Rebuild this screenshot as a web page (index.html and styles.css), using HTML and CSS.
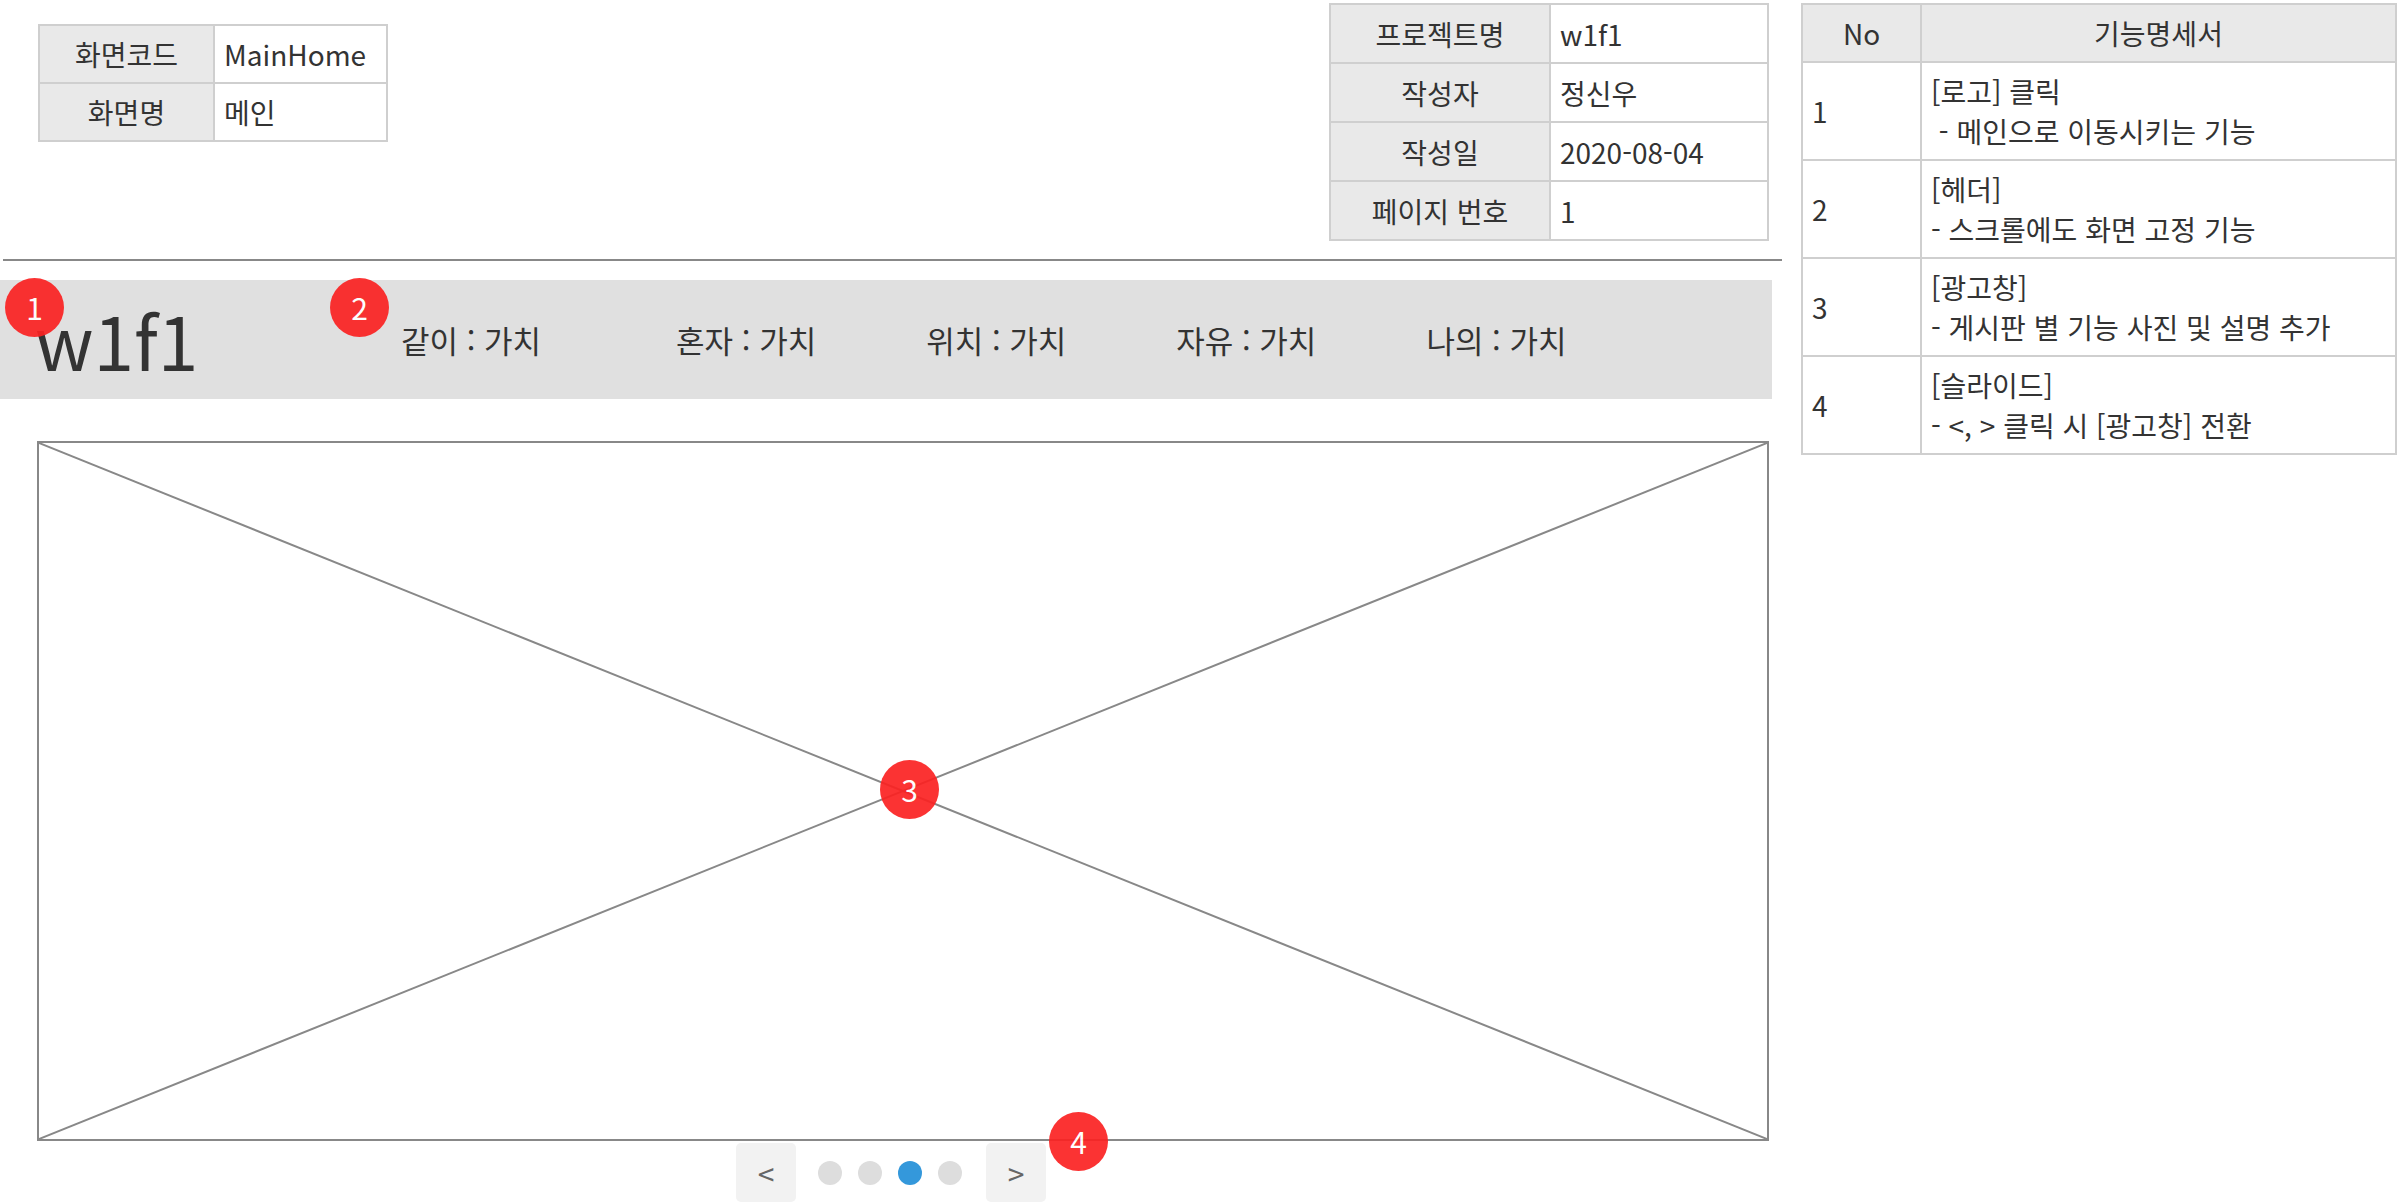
FILE: index.html
```html
<!DOCTYPE html>
<html lang="ko">

<head>
    <meta charset="UTF-8" />
    <title>MainHome</title>
    <link rel="stylesheet" href="styles.css">
</head>

<body>

    <div class="page">
        <div class="main">
            <div class="top">
                <table class="info screen">
                    <tr>
                        <th>화면코드</th>
                        <td>MainHome</td>
                    </tr>
                    <tr>
                        <th>화면명</th>
                        <td>메인</td>
                    </tr>
                </table>

                <table class="info project">
                    <tr>
                        <th>프로젝트명</th>
                        <td>w1f1</td>
                    </tr>
                    <tr>
                        <th>작성자</th>
                        <td>정신우</td>
                    </tr>
                    <tr>
                        <th>작성일</th>
                        <td>2020-08-04</td>
                    </tr>
                    <tr>
                        <th>페이지 번호</th>
                        <td>1</td>
                    </tr>
                </table>
            </div>

            <div class="divider"></div>

            <div class="header">
                <span class="badge b1">1</span>
                <span class="badge b2">2</span>
                <div class="logo">w1f1</div>
                <ul class="nav">
                    <li>같이 : 가치</li>
                    <li>혼자 : 가치</li>
                    <li>위치 : 가치</li>
                    <li>자유 : 가치</li>
                    <li>나의 : 가치</li>
                </ul>
            </div>

            <div class="banner">
                <svg class="cross" viewBox="0 0 100 100" preserveAspectRatio="none">
                    <line x1="0" y1="0" x2="100" y2="100" />
                    <line x1="100" y1="0" x2="0" y2="100" />
                </svg>
                <span class="badge b3">3</span>
            </div>

            <div class="pager">
                <button class="arrow">&lt;</button>
                <div class="dots">
                    <span class="dot"></span>
                    <span class="dot"></span>
                    <span class="dot active"></span>
                    <span class="dot"></span>
                </div>
                <button class="arrow">&gt;</button>
                <span class="badge b4">4</span>
            </div>
        </div>

        <table class="spec">
            <tr>
                <th class="no">No</th>
                <th>기능명세서</th>
            </tr>
            <tr>
                <td>1</td>
                <td>[로고] 클릭<br>&nbsp;- 메인으로 이동시키는 기능</td>
            </tr>
            <tr>
                <td>2</td>
                <td>[헤더]<br>- 스크롤에도 화면 고정 기능</td>
            </tr>
            <tr>
                <td>3</td>
                <td>[광고창]<br>- 게시판 별 기능 사진 및 설명 추가</td>
            </tr>
            <tr>
                <td>4</td>
                <td>[슬라이드]<br>- &lt;, &gt; 클릭 시 [광고창] 전환</td>
            </tr>
        </table>
    </div>

</body>

</html>
```

FILE: styles.css
```css
html,
body {
    margin: 0;
    overflow: hidden;
}

body {
    background: #ffffff;
    color: #333;
    font-family: 'Noto Sans CJK KR', 'Noto Sans', sans-serif;
    font-size: 28px;
}

.page {
    display: flex;
    align-items: flex-start;
}

.main {
    width: 1782px;
    flex-shrink: 0;
}

/* top info tables */
.top {
    display: flex;
    align-items: flex-start;
    height: 256px;
}

table {
    border-collapse: collapse;
}

.info th,
.info td,
.spec th,
.spec td {
    border: 2px solid #cfcfcf;
    padding: 0 9px;
    font-weight: normal;
    line-height: 40px;
}

.info th,
.spec th {
    background: #e9e9e9;
    text-align: center;
}

.info td {
    text-align: left;
}

.screen {
    margin: 24px 0 0 38px;
}

.screen th {
    width: 155px;
    height: 56px;
}

.screen td {
    width: 153px;
    height: 56px;
}

.project {
    margin: 3px 13px 0 auto;
}

.project th {
    width: 200px;
    height: 57px;
}

.project td {
    width: 198px;
    height: 57px;
}

.divider {
    height: 2px;
    background: #888;
    margin: 3px 0 0 3px;
}

/* header band */
.header {
    position: relative;
    display: flex;
    align-items: center;
    width: 1772px;
    height: 119px;
    margin-top: 19px;
    background: #e0e0e0;
}

.logo {
    width: 366px;
    padding-left: 35px;
    font-size: 73px;
    line-height: 1;
}

.nav {
    display: flex;
    gap: 110px;
    list-style: none;
    margin: 0;
    padding: 0;
    font-size: 31px;
    line-height: 1;
}

.nav li:first-child {
    margin-right: 25px;
}

/* placeholder image */
.banner {
    position: relative;
    width: 1728px;
    height: 696px;
    margin: 42px 0 0 37px;
    border: 2px solid #888;
}

.cross {
    display: block;
    width: 100%;
    height: 100%;
}

.cross line {
    stroke: #888;
    stroke-width: 2;
    vector-effect: non-scaling-stroke;
}

/* slider controls */
.pager {
    position: relative;
    display: flex;
    align-items: center;
    height: 59px;
    margin: 2px 0 0 736px;
}

.arrow {
    width: 60px;
    height: 59px;
    border: none;
    border-radius: 5px;
    background: #f2f2f2;
    color: #666;
    font-family: 'Noto Sans CJK KR', 'Noto Sans', sans-serif;
    font-size: 30px;
    padding: 0;
}

.dots {
    display: flex;
    gap: 16px;
    margin: 0 24px 0 22px;
}

.dot {
    width: 24px;
    height: 24px;
    border-radius: 50%;
    background: #dddddd;
}

.dot.active {
    background: #3498db;
}

/* numbered markers */
.badge {
    position: absolute;
    width: 59px;
    height: 59px;
    border-radius: 50%;
    background: #fb2222;
    opacity: 0.92;
    color: #fff;
    font-size: 30px;
    line-height: 59px;
    text-align: center;
}

.b1 {
    left: 5px;
    top: -2px;
}

.b2 {
    left: 330px;
    top: -2px;
}

.b3 {
    left: 841px;
    top: 317px;
}

.b4 {
    left: 313px;
    top: -31px;
}

/* function spec table */
.spec {
    margin: 3px 0 0 19px;
    width: 596px;
}

.spec th {
    height: 56px;
}

.spec .no {
    width: 99px;
}

.spec td {
    height: 96px;
    vertical-align: middle;
}
```
